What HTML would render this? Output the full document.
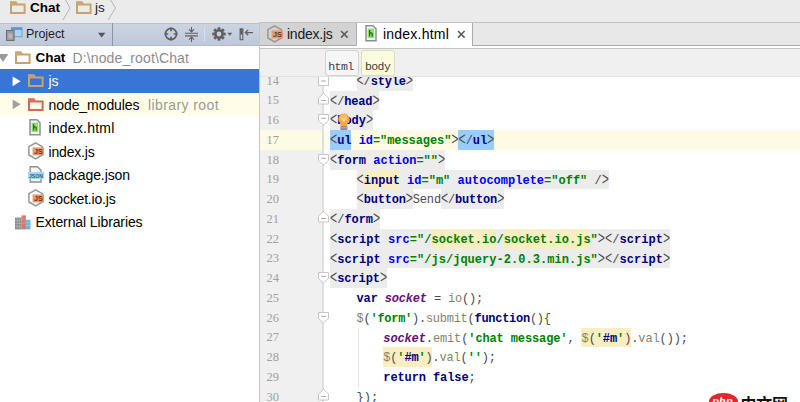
<!DOCTYPE html>
<html lang="en"><head><meta charset="utf-8"><title>Chat - index.html</title>
<style>
html,body{margin:0;padding:0}
body{width:800px;height:402px;position:relative;overflow:hidden;background:#fff;font-family:"Liberation Sans",sans-serif}
body div,body span,body svg,body pre{position:absolute;display:block;margin:0;padding:0;white-space:pre}
svg{overflow:visible}
pre{font:400 12px/1 "Liberation Mono",monospace;color:#000;transform:scaleY(1.1);transform-origin:0 9.2px}
pre i{font-style:normal}
pre b{font-weight:400;display:inline-block;position:static;transform:scaleY(1.45);transform-origin:50% 58%}
</style></head><body>
<div style="left:0px;top:0px;width:800px;height:22.5px;background:#ebebeb;"></div>
<div style="left:0px;top:22.5px;width:259px;height:23px;background:linear-gradient(#ccd4e4,#bfc8da);border-top:1px solid #b9c0cf;box-sizing:border-box;border-bottom:1px solid #b3bac8;"></div>
<div style="left:259px;top:22px;width:541px;height:1px;background:#c2c2c2;"></div>
<div style="left:259px;top:23px;width:541px;height:22px;background:#e8e8e8;"></div>
<div style="left:259px;top:45px;width:541px;height:1px;background:#ababab;"></div>
<div style="left:259px;top:46px;width:541px;height:2px;background:#ffffff;"></div>
<div style="left:259px;top:48px;width:541px;height:1px;background:#c4c4c4;"></div>
<div style="left:259px;top:49px;width:541px;height:27px;background:#f0f0f0;"></div>
<div style="left:259px;top:76px;width:541px;height:1px;background:#e2e2e2;"></div>
<div style="left:260px;top:23px;width:96px;height:22px;background:#d3d3d3;"></div>
<div style="left:355.5px;top:23px;width:1.5px;height:23px;background:#b0b0b0;"></div>
<div style="left:357px;top:23px;width:115px;height:25px;background:#ffffff;"></div>
<div style="left:472px;top:23px;width:1px;height:23px;background:#ababab;"></div>
<div style="left:259px;top:22px;width:1px;height:380px;background:#c6c6c6;"></div>
<svg style="left:10px;top:1px;" width="16" height="13.5" viewBox="0 0 16 13.5"><path d="M1 3.6 V12 H14.6 V3.6 Z" fill="none" stroke="#c9a36c" stroke-width="2"/><path d="M0 0.3 H6.2 L8 2.8 H0 Z" fill="#c9a36c"/></svg>
<span style="left:30px;top:1.17px;font:700 13.5px/1 'Liberation Sans',sans-serif;color:#000;letter-spacing:-0.000px;">Chat</span>
<svg style="left:62px;top:0px;" width="10" height="21" viewBox="0 0 10 21"><path d="M3 -1 L8 8 L1 20" fill="none" stroke="#b4b4b4" stroke-width="1"/></svg>
<svg style="left:75.7px;top:1px;" width="16" height="13.5" viewBox="0 0 16 13.5"><path d="M1 3.6 V12 H14.6 V3.6 Z" fill="none" stroke="#c9a36c" stroke-width="2"/><path d="M0 0.3 H6.2 L8 2.8 H0 Z" fill="#c9a36c"/></svg>
<span style="left:95px;top:1.17px;font:400 13.5px/1 'Liberation Sans',sans-serif;color:#222;letter-spacing:0.125px;">js</span>
<svg style="left:107px;top:0px;" width="10" height="21" viewBox="0 0 10 21"><path d="M3 -1 L8.6 8 L1 20" fill="none" stroke="#b4b4b4" stroke-width="1"/></svg>
<svg style="left:6px;top:26px;" width="18" height="16" viewBox="0 0 18 16"><rect x="5.5" y="1.7" width="10.5" height="9" fill="#a9d4f5" stroke="#6d9fc9" stroke-width="1"/><rect x="5.5" y="1.7" width="10.5" height="2.2" fill="#5d96c8"/><rect x="0.5" y="4.5" width="7.6" height="10" fill="#9a9a9a" stroke="#6e6e6e" stroke-width="1"/><rect x="2.3" y="7.5" width="4" height="5" fill="#b9b9b9"/></svg>
<span style="left:26px;top:27.62px;font:400 12.5px/1 'Liberation Sans',sans-serif;color:#1e1e1e;letter-spacing:-0.058px;">Project</span>
<svg style="left:97px;top:32px;" width="10" height="7" viewBox="0 0 10 7"><path d="M1 0.8 H8.4 L4.7 5.6 Z" fill="#555"/></svg>
<div style="left:112px;top:22.5px;width:1px;height:23px;background:#8d939f;"></div>
<svg style="left:163px;top:26px;" width="16" height="16" viewBox="0 0 16 16"><circle cx="8" cy="8" r="5.6" fill="none" stroke="#5f5f5f" stroke-width="1.7"/><path d="M8 1.6 V5.2 M8 10.8 V14.4 M1.6 8 H5.2 M10.8 8 H14.4" stroke="#5f5f5f" stroke-width="1.7"/></svg>
<svg style="left:184px;top:26px;" width="16" height="17" viewBox="0 0 16 17"><path d="M1 7.2 H14 M1 9.9 H14" stroke="#5f5f5f" stroke-width="1.1"/><path d="M7.5 1 V5.6 M5 3.4 L7.5 5.9 L10 3.4 M7.5 16 V11.4 M5 13.6 L7.5 11.1 L10 13.6" fill="none" stroke="#5f5f5f" stroke-width="1.1"/></svg>
<div style="left:204.4px;top:27px;width:1px;height:15px;background:#d9deea;"></div>
<svg style="left:211.5px;top:27px;" width="14" height="14" viewBox="0 0 14 14"><g transform="translate(7,7)"><circle r="3.6" fill="none" stroke="#5f5f5f" stroke-width="2.4"/><rect x="-1.4" y="-6.7" width="2.8" height="3.4" transform="rotate(0)" fill="#5f5f5f"/><rect x="-1.4" y="-6.7" width="2.8" height="3.4" transform="rotate(45)" fill="#5f5f5f"/><rect x="-1.4" y="-6.7" width="2.8" height="3.4" transform="rotate(90)" fill="#5f5f5f"/><rect x="-1.4" y="-6.7" width="2.8" height="3.4" transform="rotate(135)" fill="#5f5f5f"/><rect x="-1.4" y="-6.7" width="2.8" height="3.4" transform="rotate(180)" fill="#5f5f5f"/><rect x="-1.4" y="-6.7" width="2.8" height="3.4" transform="rotate(225)" fill="#5f5f5f"/><rect x="-1.4" y="-6.7" width="2.8" height="3.4" transform="rotate(270)" fill="#5f5f5f"/><rect x="-1.4" y="-6.7" width="2.8" height="3.4" transform="rotate(315)" fill="#5f5f5f"/></g></svg>
<svg style="left:227px;top:32px;" width="6" height="5" viewBox="0 0 6 5"><path d="M0.4 0.8 H5.2 L2.8 3.8 Z" fill="#5f5f5f"/></svg>
<svg style="left:239px;top:27px;" width="16" height="14" viewBox="0 0 16 14"><rect x="1.1" y="1.9" width="2.7" height="10.8" fill="#c9cdd6" stroke="#5f5f5f" stroke-width="1.1"/><rect x="1.1" y="1.9" width="2.7" height="5.6" fill="#5f5f5f"/><path d="M6.4 5.6 H14 M9.2 2.9 L6.4 5.6 L9.2 8.3" fill="none" stroke="#5f5f5f" stroke-width="1.3"/></svg>
<div style="left:0px;top:69.0px;width:259px;height:23.5px;background:#3875d6;"></div>
<div style="left:0px;top:92.5px;width:259px;height:23.5px;background:#fffde8;"></div>
<svg style="left:0px;top:53px;" width="10" height="11" viewBox="0 0 10 11"><path d="M-2.4 1 H8.4 L3 9 Z" fill="#9a9a9a"/></svg>
<svg style="left:15px;top:50.8px;" width="16" height="13.5" viewBox="0 0 16 13.5"><path d="M1 3.6 V12 H14.6 V3.6 Z" fill="none" stroke="#c9a36c" stroke-width="2"/><path d="M0 0.3 H6.2 L8 2.8 H0 Z" fill="#c9a36c"/></svg>
<span style="left:35.5px;top:51.17px;font:700 13.5px/1 'Liberation Sans',sans-serif;color:#000;letter-spacing:-0.050px;">Chat</span>
<span style="left:72.5px;top:50.75px;font:400 14px/1 'Liberation Sans',sans-serif;color:#8c8c8c;letter-spacing:0.123px;">D:\node_root\Chat</span>
<svg style="left:12px;top:75.5px;" width="10" height="11" viewBox="0 0 10 11"><path d="M0.6 0.4 L8.6 5.3 L0.6 10.2 Z" fill="#fff"/></svg>
<svg style="left:28px;top:74.3px;" width="16" height="13.5" viewBox="0 0 16 13.5"><path d="M1 3.6 V12 H14.6 V3.6 Z" fill="none" stroke="#c8a271" stroke-width="2"/><path d="M0 0.3 H6.2 L8 2.8 H0 Z" fill="#c8a271"/></svg>
<span style="left:48.5px;top:74.25px;font:400 14px/1 'Liberation Sans',sans-serif;color:#fff;letter-spacing:-0.055px;">js</span>
<svg style="left:12px;top:99.0px;" width="10" height="11" viewBox="0 0 10 11"><path d="M0.6 0.4 L8.6 5.3 L0.6 10.2 Z" fill="#a0a0a0"/></svg>
<svg style="left:28px;top:97.8px;" width="16" height="13.5" viewBox="0 0 16 13.5"><path d="M1 3.6 V12 H14.6 V3.6 Z" fill="none" stroke="#d9635d" stroke-width="2"/><path d="M0 0.3 H6.2 L8 2.8 H0 Z" fill="#d9635d"/></svg>
<span style="left:48.5px;top:97.75px;font:400 14px/1 'Liberation Sans',sans-serif;color:#000;letter-spacing:-0.071px;">node_modules</span>
<span style="left:148px;top:97.75px;font:400 14px/1 'Liberation Sans',sans-serif;color:#9a9a9a;letter-spacing:0.406px;">library root</span>
<svg style="left:29px;top:119.2px;" width="12" height="16.5" viewBox="0 0 12 16.5"><path d="M1 0.8 H8 L11 3.8 V15.7 H1 Z" fill="#f6f6f6" stroke="#8f8f8f" stroke-width="1.5"/><rect x="2.6" y="3.6" width="6.6" height="9.4" fill="#8be36f"/><path d="M4.6 5 V11.6 M4.6 8.6 Q6 7.4 7.2 8.4 V11.6" fill="none" stroke="#2d6b1d" stroke-width="1.3"/></svg>
<span style="left:48.5px;top:121.25px;font:400 14px/1 'Liberation Sans',sans-serif;color:#000;letter-spacing:0.219px;">index.html</span>
<svg style="left:27.6px;top:142.1px;" width="16.5" height="18" viewBox="0 0 16.5 18"><path d="M7.6 0.8 L14.3 4.7 V13 L7.6 16.9 L0.9 13 V4.7 Z" fill="none" stroke="#969696" stroke-width="1.5"/><rect x="4.6" y="5.4" width="11.4" height="8" fill="#f3956a"/><text x="10.3" y="12.2" font-family="Liberation Sans,sans-serif" font-weight="700" font-size="7.2" text-anchor="middle" fill="#5b3a2a">JS</text></svg>
<span style="left:48.5px;top:144.75px;font:400 14px/1 'Liberation Sans',sans-serif;color:#000;letter-spacing:-0.184px;">index.js</span>
<svg style="left:28px;top:166.2px;" width="16" height="17" viewBox="0 0 16 17"><path d="M2.2 0.8 H9.5 L13 4.2 V16 H2.2 Z" fill="#f6f6f6" stroke="#8f8f8f" stroke-width="1.4"/><rect x="0" y="6" width="16" height="7" fill="#9ed8ff"/><text x="8" y="12" font-family="Liberation Sans,sans-serif" font-weight="700" font-size="6.2" text-anchor="middle" fill="#3d5a73" textLength="14" lengthAdjust="spacingAndGlyphs">JSON</text></svg>
<span style="left:48.5px;top:168.25px;font:400 14px/1 'Liberation Sans',sans-serif;color:#000;letter-spacing:-0.084px;">package.json</span>
<svg style="left:27.6px;top:189.1px;" width="16.5" height="18" viewBox="0 0 16.5 18"><path d="M7.6 0.8 L14.3 4.7 V13 L7.6 16.9 L0.9 13 V4.7 Z" fill="none" stroke="#969696" stroke-width="1.5"/><rect x="4.6" y="5.4" width="11.4" height="8" fill="#f3956a"/><text x="10.3" y="12.2" font-family="Liberation Sans,sans-serif" font-weight="700" font-size="7.2" text-anchor="middle" fill="#5b3a2a">JS</text></svg>
<span style="left:48.5px;top:191.75px;font:400 14px/1 'Liberation Sans',sans-serif;color:#000;letter-spacing:-0.187px;">socket.io.js</span>
<svg style="left:15px;top:214.6px;" width="16" height="15" viewBox="0 0 16 15"><rect x="0" y="2.6" width="6.5" height="11.8" fill="#8a8a8a"/><path d="M0 5.5 H6.5 M0 8.5 H6.5 M0 11.5 H6.5 M2.2 2.6 V14.4 M4.4 2.6 V14.4" stroke="#b5b5b5" stroke-width="0.7"/><rect x="6.5" y="0.4" width="4.4" height="14" fill="#e0726e"/><rect x="10.9" y="4.8" width="4.6" height="9.6" fill="#6fb3e3"/><path d="M10.9 7.5 H15.5 M10.9 10.5 H15.5" stroke="#a5d2f0" stroke-width="0.7"/><path d="M6.5 4 H10.9 M6.5 8 H10.9" stroke="#eea09c" stroke-width="0.7"/></svg>
<span style="left:35.5px;top:215.25px;font:400 14px/1 'Liberation Sans',sans-serif;color:#000;letter-spacing:-0.108px;">External Libraries</span>
<svg style="left:266.6px;top:24.6px;" width="16.5" height="18" viewBox="0 0 16.5 18"><path d="M7.6 0.8 L14.3 4.7 V13 L7.6 16.9 L0.9 13 V4.7 Z" fill="none" stroke="#969696" stroke-width="1.5"/><rect x="4.6" y="5.4" width="11.4" height="8" fill="#f3956a"/><text x="10.3" y="12.2" font-family="Liberation Sans,sans-serif" font-weight="700" font-size="7.2" text-anchor="middle" fill="#5b3a2a">JS</text></svg>
<span style="left:287px;top:26.75px;font:400 14px/1 'Liberation Sans',sans-serif;color:#1a1a1a;letter-spacing:-0.246px;">index.js</span>
<svg style="left:340px;top:29.5px;" width="9" height="9" viewBox="0 0 9 9"><path d="M1 1 L7.6 7.6 M7.6 1 L1 7.6" stroke="#5a5a5a" stroke-width="1.5"/></svg>
<svg style="left:364.6px;top:25.4px;" width="12" height="16.5" viewBox="0 0 12 16.5"><path d="M1 0.8 H8 L11 3.8 V15.7 H1 Z" fill="#f6f6f6" stroke="#8f8f8f" stroke-width="1.5"/><rect x="2.6" y="3.6" width="6.6" height="9.4" fill="#8be36f"/><path d="M4.6 5 V11.6 M4.6 8.6 Q6 7.4 7.2 8.4 V11.6" fill="none" stroke="#2d6b1d" stroke-width="1.3"/></svg>
<span style="left:383px;top:26.75px;font:400 14px/1 'Liberation Sans',sans-serif;color:#000;letter-spacing:0.219px;">index.html</span>
<svg style="left:456.5px;top:29.5px;" width="9" height="9" viewBox="0 0 9 9"><path d="M1 1 L7.6 7.6 M7.6 1 L1 7.6" stroke="#5a5a5a" stroke-width="1.5"/></svg>
<div style="left:324.5px;top:50.4px;width:34px;height:25.4px;background:#f6f6f6;box-sizing:border-box;border:1px solid #d2d2d2;border-radius:3px;"></div>
<div style="left:361.3px;top:50.4px;width:33.5px;height:25.4px;background:#fbfbdd;box-sizing:border-box;border:1px solid #dcdcc0;border-radius:3px;"></div>
<span style="left:328.3px;top:60.69px;font:400 11.5px/1 'Liberation Mono',monospace;color:#3c3c3c;letter-spacing:-0.601px;">html</span>
<span style="left:365px;top:60.69px;font:400 11.5px/1 'Liberation Mono',monospace;color:#3c3c3c;letter-spacing:-0.601px;">body</span>
<div style="left:260px;top:77px;width:540px;height:325px;overflow:hidden;background:#fff" class="ed">
<div style="left:0px;top:53.0px;width:540px;height:19.75px;background:#fffae3;"></div>
<div style="left:0px;top:0px;width:62px;height:53.0px;background:#f0f0f0;"></div>
<div style="left:0px;top:72.75px;width:62px;height:252.25px;background:#f0f0f0;"></div>
<div style="left:62.2px;top:0px;width:1.4px;height:325px;background:#dfdfdf;"></div>
<div style="left:63.6px;top:53.0px;width:6.4px;height:19.75px;background:#fffdf3;"></div>
<div style="left:96.5px;top:-6.25px;width:56.0px;height:19.75px;background:#ececec;"></div>
<pre style="left:96.60px;top:-1.25px;letter-spacing:-0.200px"><i style="color:#4a4a4a"><b>&lt;</b>/</i><i style="color:#000080;font-weight:700;">style</i><i style="color:#4a4a4a"><b>&gt;</b></i></pre>
<div style="left:70.0px;top:13.5px;width:49.3px;height:19.75px;background:#ececec;"></div>
<pre style="left:70.10px;top:18.50px;letter-spacing:-0.157px"><i style="color:#4a4a4a"><b>&lt;</b>/</i><i style="color:#000080;font-weight:700;">head</i><i style="color:#4a4a4a"><b>&gt;</b></i></pre>
<div style="left:70.0px;top:33.25px;width:43.0px;height:19.75px;background:#ececec;"></div>
<pre style="left:70.10px;top:38.25px;letter-spacing:-0.033px"><i style="color:#4a4a4a"><b>&lt;</b></i><i style="color:#000080;font-weight:700;">body</i><i style="color:#4a4a4a"><b>&gt;</b></i></pre>
<div style="left:70.0px;top:53.0px;width:21.39px;height:19.75px;background:#99ccff;"></div>
<div style="left:198.35px;top:53.0px;width:35.65px;height:19.75px;background:#99ccff;"></div>
<pre style="left:70.10px;top:58.00px;letter-spacing:-0.070px"><i style="color:#4a4a4a"><b>&lt;</b></i><i style="color:#000080;font-weight:700;">ul</i><i style="color:#4a4a4a;font-weight:400;"> </i><i style="color:#0000ff;font-weight:700;">id</i><i style="color:#008000;font-weight:700;">=&quot;messages&quot;</i><i style="color:#4a4a4a"><b>&gt;</b></i><i style="color:#4a4a4a"><b>&lt;</b>/</i><i style="color:#000080;font-weight:700;">ul</i><i style="color:#4a4a4a"><b>&gt;</b></i></pre>
<div style="left:70.0px;top:72.75px;width:115.0px;height:19.75px;background:#ececec;"></div>
<pre style="left:70.10px;top:77.75px;letter-spacing:-0.013px"><i style="color:#4a4a4a"><b>&lt;</b></i><i style="color:#000080;font-weight:700;">form</i><i style="color:#4a4a4a;font-weight:400;"> </i><i style="color:#0000ff;font-weight:700;">action</i><i style="color:#008000;font-weight:700;">=&quot;&quot;</i><i style="color:#4a4a4a"><b>&gt;</b></i></pre>
<div style="left:96.5px;top:92.5px;width:252.2px;height:19.75px;background:#ececec;"></div>
<div style="left:103.71px;top:92.5px;width:36.03px;height:19.75px;background:#f8eec2;"></div>
<pre style="left:96.60px;top:97.50px;letter-spacing:0.006px"><i style="color:#4a4a4a"><b>&lt;</b></i><i style="color:#000080;font-weight:700;">input</i><i style="color:#4a4a4a;font-weight:400;"> </i><i style="color:#0000ff;font-weight:700;">id</i><i style="color:#008000;font-weight:700;">=&quot;m&quot;</i><i style="color:#4a4a4a;font-weight:400;"> </i><i style="color:#0000ff;font-weight:700;">autocomplete</i><i style="color:#008000;font-weight:700;">=&quot;off&quot;</i><i style="color:#4a4a4a"> /<b>&gt;</b></i></pre>
<div style="left:96.5px;top:112.25px;width:56.19px;height:19.75px;background:#ececec;"></div>
<div style="left:180.79px;top:112.25px;width:63.21px;height:19.75px;background:#ececec;"></div>
<pre style="left:96.60px;top:117.25px;letter-spacing:-0.176px"><i style="color:#4a4a4a"><b>&lt;</b></i><i style="color:#000080;font-weight:700;">button</i><i style="color:#4a4a4a"><b>&gt;</b></i><i style="color:#4a4a4a;font-weight:400;">Send</i><i style="color:#4a4a4a"><b>&lt;</b>/</i><i style="color:#000080;font-weight:700;">button</i><i style="color:#4a4a4a"><b>&gt;</b></i></pre>
<div style="left:70.0px;top:132.0px;width:50.0px;height:19.75px;background:#ececec;"></div>
<pre style="left:70.10px;top:137.00px;letter-spacing:-0.057px"><i style="color:#4a4a4a"><b>&lt;</b>/</i><i style="color:#000080;font-weight:700;">form</i><i style="color:#4a4a4a"><b>&gt;</b></i></pre>
<div style="left:70.0px;top:151.75px;width:340.0px;height:19.75px;background:#ececec;"></div>
<div style="left:171.28px;top:151.75px;width:65.11px;height:19.75px;background:#f8eec2;"></div>
<div style="left:243.62px;top:151.75px;width:86.81px;height:19.75px;background:#f8eec2;"></div>
<pre style="left:70.10px;top:156.75px;letter-spacing:0.034px"><i style="color:#4a4a4a"><b>&lt;</b></i><i style="color:#000080;font-weight:700;">script</i><i style="color:#4a4a4a;font-weight:400;"> </i><i style="color:#0000ff;font-weight:700;">src</i><i style="color:#008000;font-weight:700;">=&quot;/socket.io/socket.io.js&quot;</i><i style="color:#4a4a4a"><b>&gt;</b></i><i style="color:#4a4a4a"><b>&lt;</b>/</i><i style="color:#000080;font-weight:700;">script</i><i style="color:#4a4a4a"><b>&gt;</b></i></pre>
<div style="left:70.0px;top:171.5px;width:340.0px;height:19.75px;background:#ececec;"></div>
<pre style="left:70.10px;top:176.50px;letter-spacing:0.034px"><i style="color:#4a4a4a"><b>&lt;</b></i><i style="color:#000080;font-weight:700;">script</i><i style="color:#4a4a4a;font-weight:400;"> </i><i style="color:#0000ff;font-weight:700;">src</i><i style="color:#008000;font-weight:700;">=&quot;/js/jquery-2.0.3.min.js&quot;</i><i style="color:#4a4a4a"><b>&gt;</b></i><i style="color:#4a4a4a"><b>&lt;</b>/</i><i style="color:#000080;font-weight:700;">script</i><i style="color:#4a4a4a"><b>&gt;</b></i></pre>
<div style="left:70.0px;top:191.25px;width:57.0px;height:19.75px;background:#ececec;"></div>
<pre style="left:70.10px;top:196.25px;letter-spacing:-0.075px"><i style="color:#4a4a4a"><b>&lt;</b></i><i style="color:#000080;font-weight:700;">script</i><i style="color:#4a4a4a"><b>&gt;</b></i></pre>
<pre style="left:96.60px;top:216.00px;letter-spacing:-0.172px"><i style="color:#000080;font-weight:700;">var</i><i style="color:#4a4a4a;font-weight:400;"> </i><i style="color:#660e7a;font-weight:700;font-style:italic;">socket</i><i style="color:#4a4a4a;font-weight:400;"> = </i><i style="color:#84846a;font-weight:400;">io</i><i style="color:#4a4a4a;font-weight:400;">();</i></pre>
<pre style="left:96.60px;top:235.75px;letter-spacing:-0.271px"><i style="color:#84846a;font-weight:400;">$</i><i style="color:#4a4a4a;font-weight:400;">(</i><i style="color:#008000;font-weight:700;">&#x27;form&#x27;</i><i style="color:#4a4a4a;font-weight:400;">).</i><i style="color:#84846a;font-weight:400;">submit</i><i style="color:#4a4a4a;font-weight:400;">(</i><i style="color:#000080;font-weight:700;">function</i><i style="color:#4a4a4a;font-weight:400;">(){</i></pre>
<div style="left:321.35px;top:250.5px;width:49.54px;height:19.75px;background:#f8eec2;"></div>
<pre style="left:123.30px;top:255.50px;letter-spacing:-0.123px"><i style="color:#660e7a;font-weight:700;font-style:italic;">socket</i><i style="color:#4a4a4a;font-weight:400;">.</i><i style="color:#84846a;font-weight:400;">emit</i><i style="color:#4a4a4a;font-weight:400;">(</i><i style="color:#008000;font-weight:700;">&#x27;chat message&#x27;</i><i style="color:#4a4a4a;font-weight:400;">, </i><i style="color:#84846a;font-weight:400;">$</i><i style="color:#4a4a4a;font-weight:400;">(</i><i style="color:#008000;font-weight:700;">&#x27;</i><i style="color:#000080;font-weight:700;">#m</i><i style="color:#008000;font-weight:700;">&#x27;</i><i style="color:#4a4a4a;font-weight:400;">)</i><i style="color:#4a4a4a;font-weight:400;">.</i><i style="color:#84846a;font-weight:400;">val</i><i style="color:#4a4a4a;font-weight:400;">());</i></pre>
<div style="left:123.2px;top:270.25px;width:49.13px;height:19.75px;background:#f8eec2;"></div>
<pre style="left:123.30px;top:275.25px;letter-spacing:-0.181px"><i style="color:#84846a;font-weight:400;">$</i><i style="color:#4a4a4a;font-weight:400;">(</i><i style="color:#008000;font-weight:700;">&#x27;</i><i style="color:#000080;font-weight:700;">#m</i><i style="color:#008000;font-weight:700;">&#x27;</i><i style="color:#4a4a4a;font-weight:400;">)</i><i style="color:#4a4a4a;font-weight:400;">.</i><i style="color:#84846a;font-weight:400;">val</i><i style="color:#4a4a4a;font-weight:400;">(</i><i style="color:#008000;font-weight:700;">&#x27;&#x27;</i><i style="color:#4a4a4a;font-weight:400;">);</i></pre>
<pre style="left:123.30px;top:295.00px;letter-spacing:-0.100px"><i style="color:#000080;font-weight:700;">return</i><i style="color:#4a4a4a;font-weight:400;"> </i><i style="color:#000080;font-weight:700;">false</i><i style="color:#4a4a4a;font-weight:400;">;</i></pre>
<pre style="left:96.60px;top:314.75px;letter-spacing:-0.033px"><i style="color:#4a4a4a;font-weight:400;">});</i></pre>
<span style="left:6.600000000000023px;top:-2.42px;font:400 12.5px/1 'Liberation Serif',serif;color:#a0a0a0;letter-spacing:-0.1px">14</span>
<span style="left:6.600000000000023px;top:17.33px;font:400 12.5px/1 'Liberation Serif',serif;color:#a0a0a0;letter-spacing:-0.1px">15</span>
<span style="left:6.600000000000023px;top:37.08px;font:400 12.5px/1 'Liberation Serif',serif;color:#a0a0a0;letter-spacing:-0.1px">16</span>
<span style="left:6.600000000000023px;top:56.83px;font:400 12.5px/1 'Liberation Serif',serif;color:#a0a0a0;letter-spacing:-0.1px">17</span>
<span style="left:6.600000000000023px;top:76.58px;font:400 12.5px/1 'Liberation Serif',serif;color:#a0a0a0;letter-spacing:-0.1px">18</span>
<span style="left:6.600000000000023px;top:96.33px;font:400 12.5px/1 'Liberation Serif',serif;color:#a0a0a0;letter-spacing:-0.1px">19</span>
<span style="left:6.600000000000023px;top:116.08px;font:400 12.5px/1 'Liberation Serif',serif;color:#a0a0a0;letter-spacing:-0.1px">20</span>
<span style="left:6.600000000000023px;top:135.83px;font:400 12.5px/1 'Liberation Serif',serif;color:#a0a0a0;letter-spacing:-0.1px">21</span>
<span style="left:6.600000000000023px;top:155.58px;font:400 12.5px/1 'Liberation Serif',serif;color:#a0a0a0;letter-spacing:-0.1px">22</span>
<span style="left:6.600000000000023px;top:175.33px;font:400 12.5px/1 'Liberation Serif',serif;color:#a0a0a0;letter-spacing:-0.1px">23</span>
<span style="left:6.600000000000023px;top:195.08px;font:400 12.5px/1 'Liberation Serif',serif;color:#a0a0a0;letter-spacing:-0.1px">24</span>
<span style="left:6.600000000000023px;top:214.83px;font:400 12.5px/1 'Liberation Serif',serif;color:#a0a0a0;letter-spacing:-0.1px">25</span>
<span style="left:6.600000000000023px;top:234.58px;font:400 12.5px/1 'Liberation Serif',serif;color:#a0a0a0;letter-spacing:-0.1px">26</span>
<span style="left:6.600000000000023px;top:254.33px;font:400 12.5px/1 'Liberation Serif',serif;color:#a0a0a0;letter-spacing:-0.1px">27</span>
<span style="left:6.600000000000023px;top:274.08px;font:400 12.5px/1 'Liberation Serif',serif;color:#a0a0a0;letter-spacing:-0.1px">28</span>
<span style="left:6.600000000000023px;top:293.83px;font:400 12.5px/1 'Liberation Serif',serif;color:#a0a0a0;letter-spacing:-0.1px">29</span>
<span style="left:6.600000000000023px;top:313.58px;font:400 12.5px/1 'Liberation Serif',serif;color:#a0a0a0;letter-spacing:-0.1px">30</span>
<div style="left:98.3px;top:250.5px;width:1px;height:59.25px;background:#e4e4e4;"></div>
<svg style="left:57.69999999999999px;top:-1.38px;" width="11" height="10" viewBox="0 0 11 10"><rect x="0.5" y="0.5" width="10" height="9" fill="#fff" stroke="#c6c6c6"/><path d="M3 5 H8" stroke="#aaaaaa"/></svg>
<svg style="left:57.69999999999999px;top:15.78px;" width="11" height="12" viewBox="0 0 11 12"><path d="M0.5 11 H10.5 V5 L5.5 0.5 L0.5 5 Z" fill="#fff" stroke="#c6c6c6"/><path d="M3 7.5 H8" stroke="#aaaaaa"/></svg>
<svg style="left:57.69999999999999px;top:134.28px;" width="11" height="12" viewBox="0 0 11 12"><path d="M0.5 11 H10.5 V5 L5.5 0.5 L0.5 5 Z" fill="#fff" stroke="#c6c6c6"/><path d="M3 7.5 H8" stroke="#aaaaaa"/></svg>
<svg style="left:57.69999999999999px;top:312.02px;" width="11" height="12" viewBox="0 0 11 12"><path d="M0.5 11 H10.5 V5 L5.5 0.5 L0.5 5 Z" fill="#fff" stroke="#c6c6c6"/><path d="M3 7.5 H8" stroke="#aaaaaa"/></svg>
<svg style="left:57.69999999999999px;top:37.22px;" width="11" height="12" viewBox="0 0 11 12"><path d="M0.5 0.5 H10.5 V6.5 L5.5 11 L0.5 6.5 Z" fill="#fff" stroke="#c6c6c6"/><path d="M3 4.3 H8" stroke="#aaaaaa"/></svg>
<svg style="left:57.69999999999999px;top:76.72px;" width="11" height="12" viewBox="0 0 11 12"><path d="M0.5 0.5 H10.5 V6.5 L5.5 11 L0.5 6.5 Z" fill="#fff" stroke="#c6c6c6"/><path d="M3 4.3 H8" stroke="#aaaaaa"/></svg>
<svg style="left:57.69999999999999px;top:195.23px;" width="11" height="12" viewBox="0 0 11 12"><path d="M0.5 0.5 H10.5 V6.5 L5.5 11 L0.5 6.5 Z" fill="#fff" stroke="#c6c6c6"/><path d="M3 4.3 H8" stroke="#aaaaaa"/></svg>
<svg style="left:57.69999999999999px;top:234.73px;" width="11" height="12" viewBox="0 0 11 12"><path d="M0.5 0.5 H10.5 V6.5 L5.5 11 L0.5 6.5 Z" fill="#fff" stroke="#c6c6c6"/><path d="M3 4.3 H8" stroke="#aaaaaa"/></svg>
<svg style="left:77.60000000000002px;top:36.0px;" width="12" height="18" viewBox="0 0 12 18"><path d="M5.9 0.4 A5.5 5.5 0 0 1 10 9.6 Q9.2 11 9.2 13 H2.6 Q2.6 11 1.8 9.6 A5.5 5.5 0 0 1 5.9 0.4 Z" fill="#f6a83c"/><circle cx="5.9" cy="5" r="3.4" fill="#f9bd66"/><path d="M4 4.6 L5.9 8.4 L7.8 4.6" fill="none" stroke="#fde0ae" stroke-width="0.9"/><rect x="2.4" y="13" width="7" height="3.9" rx="1" fill="#8c8c8c"/><rect x="2.4" y="14.4" width="7" height="0.9" fill="#b8b8b8"/></svg>
<div style="left:448.70000000000005px;top:315.6px;width:29px;height:17px;border-radius:50%;background:#e8252c"></div>
<span style="left:452.20000000000005px;top:319px;font:italic 700 11px/1 'Liberation Sans',sans-serif;color:#fff;letter-spacing:0.2px">php</span>
<span style="left:480.5px;top:319.5px;font:700 16px/1 'Liberation Sans','Noto Sans CJK SC',sans-serif;color:#111;letter-spacing:-0.2px">中文网</span>
</div>
</body></html>
